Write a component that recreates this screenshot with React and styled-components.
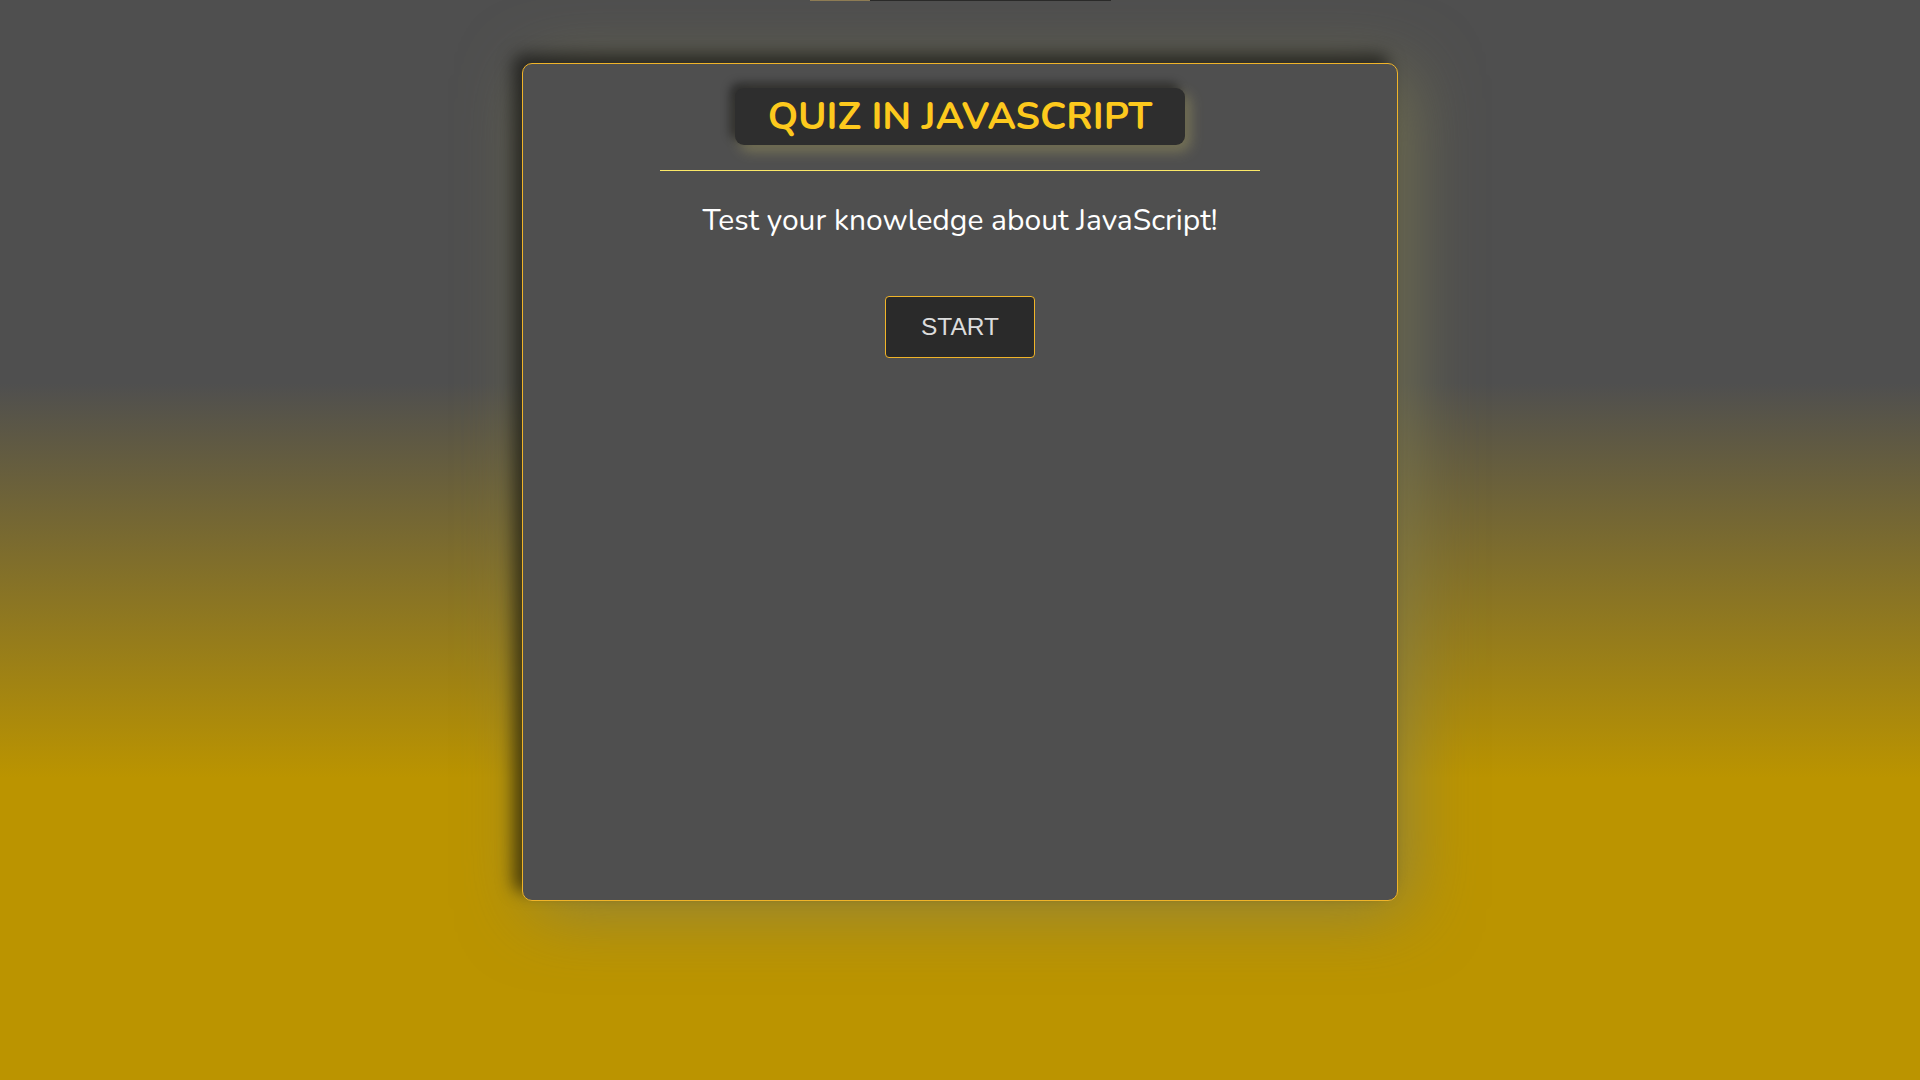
import React from 'react';
import styled, { createGlobalStyle } from 'styled-components';

const GlobalStyle = createGlobalStyle`
  html, body {
    margin: 0;
    padding: 0;
    height: 100%;
  }
  body {
    min-height: 1080px;
    background: linear-gradient(to bottom, #4f4f4f 35.5%, #bb9400 72%);
    font-family: 'Nunito', 'Open Sans', sans-serif;
    overflow: hidden;
  }
`;

const Page = styled.main`
  display: flex;
  flex-direction: column;
  align-items: center;
  height: 1080px;
`;

const Progress = styled.div`
  width: 301px;
  height: 1px;
  background: #2a2a2a;
  display: flex;
`;

const ProgressFill = styled.div`
  height: 100%;
  background: #8f7c55;
`;

const Card = styled.section`
  box-sizing: border-box;
  width: 876px;
  height: 838px;
  margin-top: 62px;
  background: #4f4f4f;
  border: 1px solid #f0b429;
  border-radius: 10px;
  box-shadow: -9px -9px 16px rgba(0, 0, 0, 0.55), 10px 10px 70px rgba(128, 126, 82, 0.75);
  display: flex;
  flex-direction: column;
  align-items: center;
`;

const Title = styled.h1`
  box-sizing: border-box;
  margin: 24px 0 0;
  width: 450px;
  height: 57px;
  display: flex;
  align-items: center;
  justify-content: center;
  background: #2e2e2e;
  color: #fdc91d;
  font-size: 38.7px;
  font-weight: 700;
  border-radius: 9px;
  box-shadow: -5px -5px 10px rgba(0, 0, 0, 0.45), 5px 6px 14px rgba(230, 215, 110, 0.3);
`;

const Divider = styled.hr`
  width: 600px;
  margin: 25px 0 0;
  border: none;
  border-top: 1px solid #fbe867;
`;

const Subtitle = styled.p`
  margin: 32px 0 0;
  color: #ffffff;
  font-size: 30px;
  line-height: 36px;
`;

const StartButton = styled.button`
  box-sizing: border-box;
  margin-top: 57px;
  width: 150px;
  height: 62px;
  background: #2a2a2a;
  border: 1px solid #f0b429;
  border-radius: 4px;
  color: #dcdcdc;
  font-family: 'Liberation Sans', Arial, sans-serif;
  font-size: 24.5px;
  cursor: pointer;
`;

export default function App() {
  const progress = 20;
  return (
    <>
      <GlobalStyle />
      <Page>
        <Progress>
          <ProgressFill style={{ width: `${progress}%` }} />
        </Progress>
        <Card>
          <Title>QUIZ IN JAVASCRIPT</Title>
          <Divider />
          <Subtitle>Test your knowledge about JavaScript!</Subtitle>
          <StartButton>START</StartButton>
        </Card>
      </Page>
    </>
  );
}
